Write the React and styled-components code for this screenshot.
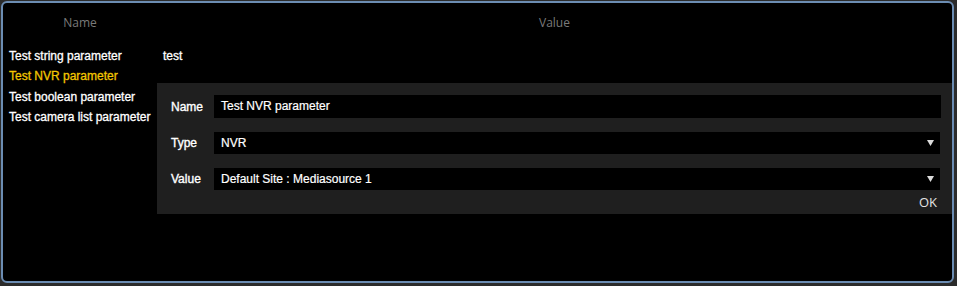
import React from 'react';
import styled, { createGlobalStyle } from 'styled-components';

const GlobalStyle = createGlobalStyle`
  html, body {
    margin: 0;
    padding: 0;
    background: #2b2b2b;
  }
`;

const Frame = styled.div`
  box-sizing: border-box;
  width: 953px;
  height: 282px;
  margin: 1px 0 0 1px;
  border: 2px solid #6b8cb2;
  border-radius: 6px;
  background: #000;
  overflow: hidden;
  font-family: 'Liberation Sans', Arial, sans-serif;
`;

const HeaderRow = styled.div`
  display: grid;
  grid-template-columns: 154px 1fr;
  padding: 12px 0 15px;
  font-family: 'Open Sans', 'Segoe UI', sans-serif;
  font-size: 12px;
  line-height: 16px;
  color: #7a7a7a;
`;

const HeaderCell = styled.div`
  text-align: center;
`;

const Body = styled.div`
  position: relative;
`;

const Row = styled.div`
  display: grid;
  grid-template-columns: 154px 1fr;
  height: 20.4px;
  line-height: 20.4px;
  font-size: 12px;
  -webkit-text-stroke: 0.3px currentColor;
  color: ${({ $selected }) => ($selected ? '#f2c600' : '#fff')};
`;

const NameCell = styled.div`
  padding-left: 6px;
  white-space: nowrap;
`;

const ValueCell = styled.div`
  padding-left: 6px;
  color: #fff;
`;

const Editor = styled.div`
  position: absolute;
  top: 37px;
  left: 154px;
  right: 0;
  box-sizing: border-box;
  padding: 12px 11px 4px 14px;
  background: #1f1f1f;
  display: flex;
  flex-direction: column;
  gap: 14px;
`;

const Field = styled.div`
  display: grid;
  grid-template-columns: 43px 1fr;
  align-items: center;
`;

const Label = styled.div`
  font-size: 12px;
  color: #fff;
  -webkit-text-stroke: 0.35px currentColor;
`;

const Box = styled.div`
  position: relative;
  height: ${({ $tall }) => ($tall ? '23px' : '22px')};
  margin-right: ${({ $select }) => ($select ? '1px' : '0')};
  padding-left: 7px;
  background: #000;
  color: #fff;
  font-size: 12px;
  line-height: ${({ $tall }) => ($tall ? '23px' : '22px')};
  -webkit-text-stroke: 0.2px currentColor;
`;

const Caret = styled.svg`
  position: absolute;
  right: 6px;
  top: 8px;
`;

const Footer = styled.div`
  display: flex;
  justify-content: flex-end;
  margin-top: -10px;
  padding-right: 4px;
`;

const OkButton = styled.button`
  border: 0;
  background: none;
  padding: 0;
  font-family: 'Open Sans', 'Segoe UI', sans-serif;
  font-size: 13px;
  line-height: 16px;
  color: #e4e4e4;
  cursor: pointer;
`;

const parameters = [
  { name: 'Test string parameter', value: 'test' },
  { name: 'Test NVR parameter', selected: true },
  { name: 'Test boolean parameter' },
  { name: 'Test camera list parameter' },
];

const Select = ({ children }) => (
  <Box $select>
    {children}
    <Caret width="7" height="6" viewBox="0 0 7 6">
      <path d="M0 0 H7 L3.5 6 Z" fill="#dcdcdc" />
    </Caret>
  </Box>
);

const App = () => (
  <>
    <GlobalStyle />
    <Frame>
      <HeaderRow>
        <HeaderCell>Name</HeaderCell>
        <HeaderCell>Value</HeaderCell>
      </HeaderRow>
      <Body>
        {parameters.map((p, i) => (
          <Row key={i} $selected={p.selected}>
            <NameCell>{p.name}</NameCell>
            <ValueCell>{p.value}</ValueCell>
          </Row>
        ))}
        <Editor>
          <Field>
            <Label>Name</Label>
            <Box $tall>Test NVR parameter</Box>
          </Field>
          <Field>
            <Label>Type</Label>
            <Select>NVR</Select>
          </Field>
          <Field>
            <Label>Value</Label>
            <Select>Default Site : Mediasource 1</Select>
          </Field>
          <Footer>
            <OkButton>OK</OkButton>
          </Footer>
        </Editor>
      </Body>
    </Frame>
  </>
);

export default App;
